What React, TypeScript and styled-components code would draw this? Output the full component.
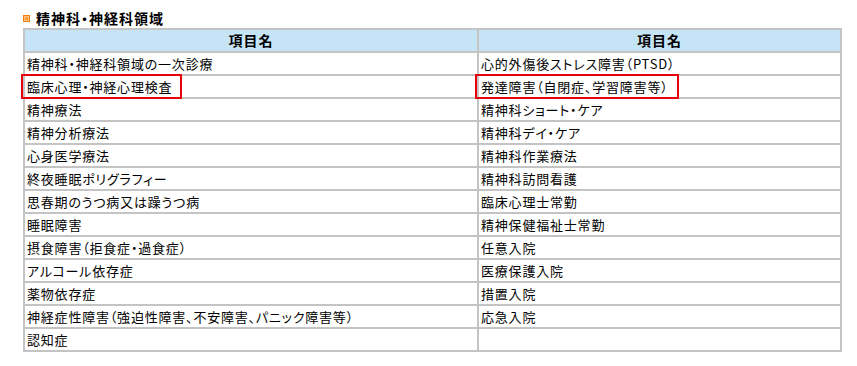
import * as React from "react";
import styled, { createGlobalStyle } from "styled-components";

const GlobalStyle = createGlobalStyle`
  html, body {
    margin: 0;
    padding: 0;
    background: #fff;
  }
  body {
    font-family: "Noto Sans CJK JP", "Liberation Sans", sans-serif;
    color: #000;
  }
`;

const Page = styled.div`
  padding: 9px 0 0 23px;
  width: 819px;
`;

const Heading = styled.h3`
  display: flex;
  align-items: center;
  gap: 6px;
  margin: 0 0 1px;
  font-size: 14px;
  line-height: 18px;
  font-weight: bold;
  letter-spacing: 1px;
  font-feature-settings: "palt";
`;

const Bullet = styled.span`
  display: inline-block;
  box-sizing: border-box;
  width: 7px;
  height: 7px;
  border: 1px solid #f07d10;
  background: #ff9c3c;
  box-shadow: inset 0 0 0 1px #ffc184;
`;

const Table = styled.table`
  width: 819px;
  border-collapse: collapse;
  border: 2px solid #c4c4c4;
  table-layout: fixed;
  font-size: 13px;
  letter-spacing: 0.8px;
  font-feature-settings: "palt";
`;

const HeadCell = styled.th<{ $w: number }>`
  width: ${(p) => p.$w}px;
  height: 21px;
  padding: 0;
  border: 2px solid #c4c4c4;
  background: #c5e5f7;
  font-size: 14px;
  font-weight: bold;
  letter-spacing: 1px;
  text-align: center;
  line-height: 21px;
`;

const Cell = styled.td`
  height: 21px;
  padding: 0 2px;
  border: 2px solid #c4c4c4;
  line-height: 21px;
  white-space: nowrap;
`;

const Mark = styled.span`
  position: relative;
  display: inline-block;

  &::after {
    content: "";
    position: absolute;
    top: -2px;
    bottom: -2px;
    left: -6px;
    right: -10px;
    border: 2px solid #e8000b;
    pointer-events: none;
  }
`;

type Item = { text: string; marked?: boolean };

const rows: [Item, Item][] = [
  [{ text: "精神科・神経科領域の一次診療" }, { text: "心的外傷後ストレス障害（PTSD）" }],
  [{ text: "臨床心理・神経心理検査", marked: true }, { text: "発達障害（自閉症、学習障害等）", marked: true }],
  [{ text: "精神療法" }, { text: "精神科ショート・ケア" }],
  [{ text: "精神分析療法" }, { text: "精神科デイ・ケア" }],
  [{ text: "心身医学療法" }, { text: "精神科作業療法" }],
  [{ text: "終夜睡眠ポリグラフィー" }, { text: "精神科訪問看護" }],
  [{ text: "思春期のうつ病又は躁うつ病" }, { text: "臨床心理士常勤" }],
  [{ text: "睡眠障害" }, { text: "精神保健福祉士常勤" }],
  [{ text: "摂食障害（拒食症・過食症）" }, { text: "任意入院" }],
  [{ text: "アルコール依存症" }, { text: "医療保護入院" }],
  [{ text: "薬物依存症" }, { text: "措置入院" }],
  [{ text: "神経症性障害（強迫性障害、不安障害、パニック障害等）" }, { text: "応急入院" }],
  [{ text: "認知症" }, { text: "" }],
];

function renderItem(item: Item) {
  if (item.marked) return <Mark>{item.text}</Mark>;
  return item.text;
}

export default function App() {
  return (
    <>
      <GlobalStyle />
      <Page>
        <Heading>
          <Bullet />
          精神科・神経科領域
        </Heading>
        <Table>
          <thead>
            <tr>
              <HeadCell $w={452}>項目名</HeadCell>
              <HeadCell $w={361}>項目名</HeadCell>
            </tr>
          </thead>
          <tbody>
            {rows.map((r, i) => (
              <tr key={i}>
                <Cell>{renderItem(r[0])}</Cell>
                <Cell>{renderItem(r[1])}</Cell>
              </tr>
            ))}
          </tbody>
        </Table>
      </Page>
    </>
  );
}
